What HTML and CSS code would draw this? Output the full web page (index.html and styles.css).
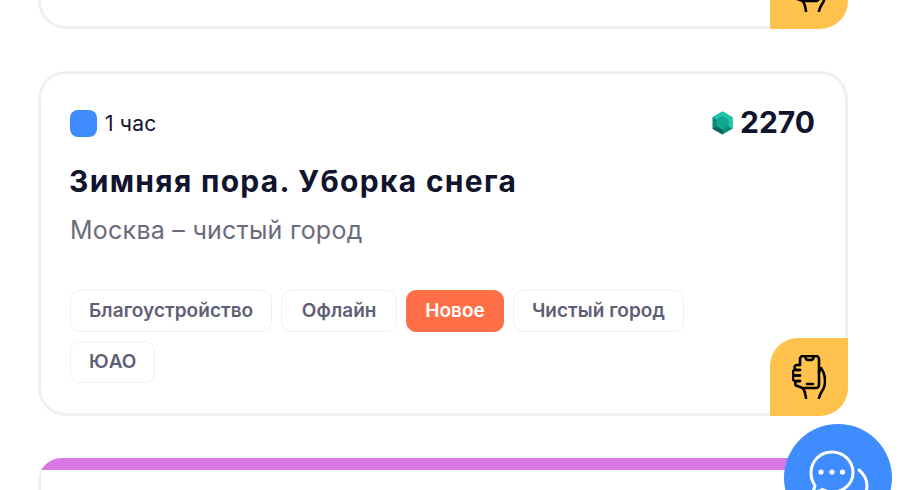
FILE: index.html
```html
<!DOCTYPE html>
<html>
<head>
    <title>Задания</title>
    <link rel="stylesheet" href="styles.css">
</head>
<body>
    <div class="list">
        <div class="card card-prev">
            <div class="corner">
                <svg class="phone" viewBox="0 0 34 44"><use href="#phone-icon"/></svg>
            </div>
        </div>

        <div class="card">
            <div class="card-top">
                <div class="duration">
                    <span class="duration-icon"></span>
                    <span>1 час</span>
                </div>
                <div class="points">
                    <svg class="gem" viewBox="0 0 22 24">
                        <polygon points="11,0 21.500,6 21.500,18 11,24 .5,18 .5,6" fill="#0b8a7b"/>
                        <polygon points="11,0 21.500,6 21.500,18 17,15.500 17,8.500 11,5 5,8.500 .5,6" fill="#1fc4ab"/>
                        <polygon points="11,5 17,8.500 17,15.500 11,19 5,15.500 5,8.500" fill="#12a793"/>
                        <polygon points=".5,18 5,15.500 11,19 11,24" fill="#07665b"/>
                    </svg>
                    <span>2270</span>
                </div>
            </div>
            <h2 class="title">Зимняя пора. Уборка снега</h2>
            <div class="project">Москва – чистый город</div>
            <div class="tags">
                <span class="tag">Благоустройство</span>
                <span class="tag tag-offline">Офлайн</span>
                <span class="tag tag-new">Новое</span>
                <span class="tag">Чистый город</span>
                <span class="tag">ЮАО</span>
            </div>
            <div class="corner">
                <svg class="phone" viewBox="0 0 34 44">
                    <g id="phone-icon" fill="none" stroke="#000" stroke-width="2.600" stroke-linecap="round" stroke-linejoin="round">
                        <path d="M8 10V4a3 3 0 0 1 3-3h13a3 3 0 0 1 3 3v26a3 3 0 0 1-3 3H12"/>
                        <path d="M13 1c.5 3 1.500 4 3 4h3c1.500 0 2.500-1 3-4"/>
                        <path d="M15 29h6"/>
                        <path d="M8 10H5a2.500 2.500 0 0 0 0 5h3"/>
                        <path d="M8 15H3.500a2.500 2.500 0 0 0 0 5.500H8"/>
                        <path d="M8 20.500H3.500a2.500 2.500 0 0 0 0 5.500H8"/>
                        <path d="M8 26H6a2.500 2.500 0 0 0-.5 5l4 1.500c2 .8 3 3 3.500 5.500l1 5"/>
                        <path d="M27 17l2-4c1.500 2 4 6 4 13 0 6-2 9-3.500 11-1 1.500-2 4-2.500 6"/>
                    </g>
                </svg>
            </div>
        </div>

        <div class="card-next">
            <div class="strip"></div>
            <div class="card-next-body"></div>
        </div>
    </div>

    <div class="chat">
        <svg class="chat-icon" viewBox="0 0 108 108" fill="none" stroke="#fff" stroke-width="3" stroke-linecap="round" stroke-linejoin="round">
            <path d="M48 28C36 28 27 37 27 49c0 5 1.500 9 4 12.500-.5 3-1.500 5-2.500 7 3.500 0 7-1 10-3 3 1.500 6 2.500 9.500 2.500 12 0 21-8.500 21-19.500S60 28 48 28z"/>
            <path d="M75 46c5 4 8 10 8 16 0 4-1 8-3 11 .5 3 1.500 5 3 7-4 0-7-1-10-3"/>
            <circle cx="37" cy="48" r="2.600" fill="#fff" stroke="none"/>
            <circle cx="48" cy="48" r="2.600" fill="#fff" stroke="none"/>
            <circle cx="58.500" cy="48" r="2.600" fill="#fff" stroke="none"/>
        </svg>
    </div>
</body>
</html>
```

FILE: styles.css
```css
html, body {
    height: 100%;
    overflow: hidden;
}
body {
    margin: 0;
    background: #fff;
    font-family: Inter, "Noto Sans", Arial, sans-serif;
    color: #11142d;
}
.list {
    display: flex;
    flex-direction: column;
    gap: 42px;
    height: 490px;
    width: 810px;
    margin-left: 38px;
}
.card {
    position: relative;
    flex: none;
    box-sizing: border-box;
    height: 345px;
    padding: 35px 30px 0 29px;
    background: #fff;
    border: 3px solid #f0f0f0;
    border-radius: 28px;
}
.card-prev {
    height: 229px;
    margin-top: -200px;
}
.card-next {
    flex: none;
    height: 100px;
    border-radius: 24px 24px 0 0;
    overflow: hidden;
}
.strip {
    height: 12px;
    background: #d977e4;
}
.card-next-body {
    height: 88px;
    border: solid #f0f0f0;
    border-width: 0 3px;
}
.card-top {
    display: flex;
    justify-content: space-between;
    align-items: center;
    height: 28px;
}
.duration {
    display: flex;
    align-items: center;
    gap: 8px;
    font-size: 21px;
    letter-spacing: 0.2px;
}
.duration-icon {
    width: 27px;
    height: 27px;
    background: #3f8cff;
    border-radius: 8px;
}
.points {
    display: flex;
    align-items: center;
    gap: 7px;
    margin-top: -3px;
    font-size: 30px;
    font-weight: 700;
}
.gem {
    width: 21px;
    height: 24px;
    margin-top: 3px;
}
.title {
    margin: 26px 0 0 -1px;
    font-size: 30px;
    line-height: 36px;
    font-weight: 700;
    letter-spacing: 1.300px;
}
.project {
    margin-top: 16px;
    font-size: 25px;
    line-height: 30px;
    letter-spacing: 0.250px;
    color: #6a6b7d;
}
.tags {
    display: flex;
    flex-wrap: wrap;
    gap: 9px;
    width: 640px;
    margin-top: 45px;
}
.tag {
    box-sizing: border-box;
    height: 42px;
    padding: 0 18px;
    border: 1px solid #f0f0f0;
    border-radius: 10px;
    font-size: 19px;
    font-weight: 600;
    line-height: 40px;
    letter-spacing: 0.050px;
    color: #5f6075;
}
.tag-offline {
    min-width: 116px;
    text-align: center;
}
.tag-new {
    background: #ff7049;
    border-color: #ff7049;
    color: #fff;
}
.corner {
    position: absolute;
    right: -3px;
    bottom: -3px;
    display: flex;
    align-items: center;
    justify-content: center;
    width: 78px;
    height: 78px;
    background: #ffc34d;
    border-radius: 28px 0 28px 0;
}
.phone {
    width: 34px;
    height: 44px;
}
.chat {
    position: fixed;
    left: 784px;
    top: 424px;
    width: 108px;
    height: 108px;
    background: #3f8cff;
    border-radius: 50%;
}
.chat-icon {
    display: block;
    width: 108px;
    height: 108px;
}
```
